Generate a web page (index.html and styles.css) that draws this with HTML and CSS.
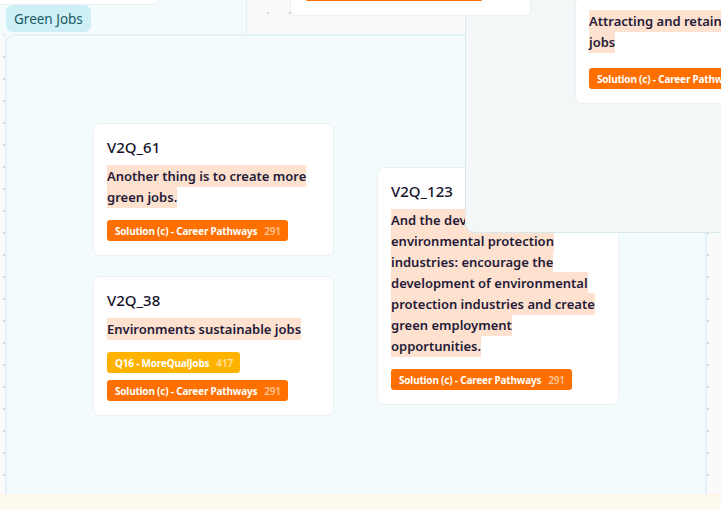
FILE: index.html
```html
<!DOCTYPE html>
<html>
<head>
<meta charset="utf-8">
<link rel="stylesheet" href="styles.css">
</head>
<body>
<div class="canvas">
  <div class="group group-prev">
    <div class="card card-prev"></div>
  </div>

  <div class="card card-topmid">
    <div class="tag-bar"></div>
  </div>

  <div class="group-label">Green Jobs</div>

  <div class="group group-green">
    <div class="card card-a">
      <div class="card-title">V2Q_61</div>
      <div class="card-text"><span class="hl">Another thing is to create more green jobs.</span></div>
      <div class="tags">
        <span class="tag tag-orange"><span class="tag-label">Solution (c) - Career Pathways</span><span class="tag-count">291</span></span>
      </div>
    </div>

    <div class="card card-b">
      <div class="card-title">V2Q_38</div>
      <div class="card-text"><span class="hl">Environments sustainable jobs</span></div>
      <div class="tags">
        <span class="tag tag-yellow"><span class="tag-label">Q16 - MoreQualJobs</span><span class="tag-count">417</span></span>
        <span class="tag tag-orange"><span class="tag-label">Solution (c) - Career Pathways</span><span class="tag-count">291</span></span>
      </div>
    </div>

    <div class="card card-c">
      <div class="card-title">V2Q_123</div>
      <div class="card-text"><span class="hl">And the development of environmental protection industries: encourage the development of environmental protection industries and create green employment opportunities.</span></div>
      <div class="tags">
        <span class="tag tag-orange"><span class="tag-label">Solution (c) - Career Pathways</span><span class="tag-count">291</span></span>
      </div>
    </div>
  </div>

  <div class="panel">
    <div class="card card-panel">
      <div class="card-text"><span class="hl">Attracting and retaining green jobs</span></div>
      <div class="tags">
        <span class="tag tag-orange"><span class="tag-label">Solution (c) - Career Pathways</span><span class="tag-count">291</span></span>
      </div>
    </div>
  </div>

  <div class="bottom-bar"></div>
</div>
</body>
</html>
```

FILE: styles.css
```css
html, body {
  margin: 0;
  padding: 0;
  width: 721px;
  height: 510px;
  overflow: hidden;
}

body {
  font-family: "Noto Sans", "Open Sans", sans-serif;
  color: #1c1630;
  background-color: #fafafa;
  background-image: radial-gradient(circle at center, #d2d2d2 0.8px, transparent 1.2px);
  background-size: 22px 22px;
  background-position: -7px 2px;
}

.canvas {
  position: relative;
  width: 721px;
  height: 510px;
}

.group {
  position: absolute;
  background: #f3fbfd;
  box-sizing: border-box;
}

.group-prev {
  left: -10px;
  top: -10px;
  width: 257px;
  height: 45px;
  border-right: 1px solid #dcf0f6;
}

.card {
  position: absolute;
  background: #ffffff;
  border: 1px solid #edf0f2;
  border-radius: 7px;
  box-sizing: border-box;
  padding: 13px;
  display: flex;
  flex-direction: column;
  align-items: flex-start;
}

.card-prev {
  left: 0;
  top: -20px;
  width: 169px;
  height: 35px;
}

.card-topmid {
  left: 290px;
  top: -30px;
  width: 241px;
  height: 46px;
  z-index: 3;
  justify-content: flex-end;
  padding: 0 14px 14px 14px;
}

.tag-bar {
  width: 178px;
  height: 21px;
  background: #ff7000;
  border-radius: 3px;
}

.group-label {
  position: absolute;
  left: 6px;
  top: 5px;
  height: 27px;
  padding: 0 8px;
  display: flex;
  align-items: center;
  background: #cdeff5;
  color: #195a67;
  border-radius: 7px;
  font-size: 13.5px;
  z-index: 2;
}

.group-green {
  left: 5px;
  top: 34px;
  width: 702px;
  height: 490px;
  border: 2px solid #e1f3f8;
  border-radius: 9px;
}

.card-a {
  left: 86px;
  top: 87px;
  width: 241px;
  height: 133px;
}

.card-b {
  left: 86px;
  top: 240px;
  width: 241px;
  height: 140px;
}

.card-c {
  left: 370px;
  top: 131px;
  width: 242px;
  height: 238px;
}

.card-title {
  font-size: 15px;
  line-height: 20px;
  font-weight: 500;
  color: #17132b;
  margin-bottom: 9px;
}

.card-text {
  font-size: 13px;
  line-height: 21px;
  font-weight: 600;
  color: #241a38;
  margin-bottom: 12px;
}

.hl {
  background: #fee1cf;
  padding: 2px 0;
  -webkit-box-decoration-break: clone;
  box-decoration-break: clone;
}

.tags {
  display: flex;
  flex-direction: column;
  align-items: flex-start;
  gap: 7px;
}

.tag {
  display: inline-flex;
  align-items: center;
  height: 21px;
  padding: 0 7px 0 8px;
  border-radius: 3px;
  font-size: 10px;
  font-weight: 700;
  color: #ffffff;
  white-space: nowrap;
  letter-spacing: -0.2px;
}

.tag-orange {
  background: #ff7000;
}

.tag-yellow {
  background: #ffb300;
}

.tag-label {
  margin-right: 7px;
}

.tag-orange .tag-count {
  color: #ffc49a;
  font-weight: 600;
}

.tag-yellow .tag-count {
  color: #ffe3a3;
  font-weight: 600;
}

.panel {
  position: absolute;
  left: 465px;
  top: -20px;
  width: 300px;
  height: 253px;
  background: #f3f7f8;
  border: 1px solid #d7e9ec;
  border-radius: 9px;
  box-sizing: border-box;
  z-index: 2;
}

.card-panel {
  left: 109px;
  top: 16px;
  width: 241px;
  height: 107px;
}

.card-panel .card-text {
  margin-bottom: 15px;
}

.bottom-bar {
  position: absolute;
  left: 0;
  top: 494px;
  width: 721px;
  height: 16px;
  background: #fffaf0;
  border-top: 1px solid #fdf3e0;
  box-sizing: border-box;
  z-index: 4;
}
```
